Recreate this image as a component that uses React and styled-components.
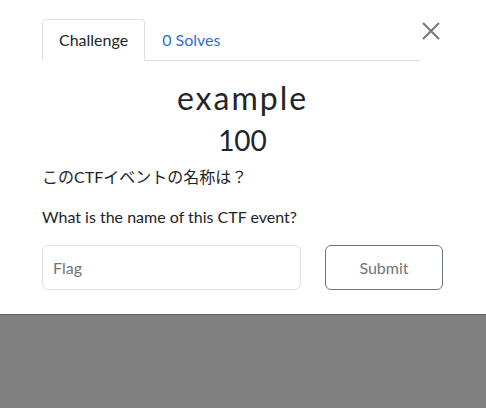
import React from 'react';
import styled, { createGlobalStyle } from 'styled-components';

const GlobalStyle = createGlobalStyle`
	body {
		margin: 0;
		background: #808080;
		font-family: Lato, "Noto Sans CJK JP", sans-serif;
		color: #212529;
	}
`;

const Modal = styled.div`
	position: relative;
	background: #fff;
	padding: 19px 43px 24px 42px;
	border-bottom: 1px solid #5f5f5f;
`;

const Close = styled.button`
	position: absolute;
	top: 21px;
	right: 45px;
	width: 20px;
	height: 20px;
	padding: 0;
	border: none;
	background: none;
	cursor: pointer;
`;

const Nav = styled.div`
	display: flex;
	margin-right: 23px;
	border-bottom: 1px solid #dee2e6;
`;

const Tab = styled.div`
	padding: 8px 16px;
	margin-bottom: -1px;
	font-size: 16px;
	line-height: 24px;
	border: 1px solid ${(props) => (props.active ? '#dee2e6' : 'transparent')};
	border-bottom-color: ${(props) => (props.active ? '#fff' : 'transparent')};
	border-radius: 4px 4px 0 0;
	color: ${(props) => (props.active ? '#212529' : '#2f6fd0')};
`;

const Title = styled.h2`
	margin: 18px 0 0;
	text-align: center;
	font-size: 32px;
	font-weight: 400;
	letter-spacing: 2px;
	line-height: 38px;
`;

const Points = styled.h3`
	margin: 6px 0 0;
	text-align: center;
	font-size: 28px;
	font-weight: 400;
	line-height: 34px;
`;

const Text = styled.p`
	margin: ${(props) => (props.first ? '8px' : '16px')} 0 0;
	font-size: 16px;
	line-height: 24px;
`;

const Form = styled.form`
	display: flex;
	justify-content: space-between;
	margin-top: 16px;
`;

const Input = styled.input`
	box-sizing: border-box;
	width: 259px;
	height: 45px;
	padding: 0 10px;
	border: 1px solid #dfe1e5;
	border-radius: 6px;
	font-family: Lato, sans-serif;
	font-size: 16px;
	color: #495057;
	::placeholder {
		color: #6c757d;
	}
	&:focus {
		outline: none;
	}
`;

const Submit = styled.button`
	box-sizing: border-box;
	width: 118px;
	height: 45px;
	border: 1px solid #6c757d;
	border-radius: 6px;
	background: #fff;
	font-family: Lato, sans-serif;
	font-size: 16px;
	color: #6c757d;
	cursor: pointer;
`;

export default function App() {
	return (
		<>
			<GlobalStyle />
			<Modal>
				<Close aria-label="Close">
					<svg width="20" height="20" viewBox="0 0 20 20">
						<path d="M2 2 L18 18 M18 2 L2 18" stroke="#777" strokeWidth="2" />
					</svg>
				</Close>
				<Nav>
					<Tab active>Challenge</Tab>
					<Tab>0 Solves</Tab>
				</Nav>
				<Title>example</Title>
				<Points>100</Points>
				<Text first>このCTFイベントの名称は？</Text>
				<Text>What is the name of this CTF event?</Text>
				<Form onSubmit={(e) => e.preventDefault()}>
					<Input placeholder="Flag" />
					<Submit type="submit">Submit</Submit>
				</Form>
			</Modal>
		</>
	);
}
